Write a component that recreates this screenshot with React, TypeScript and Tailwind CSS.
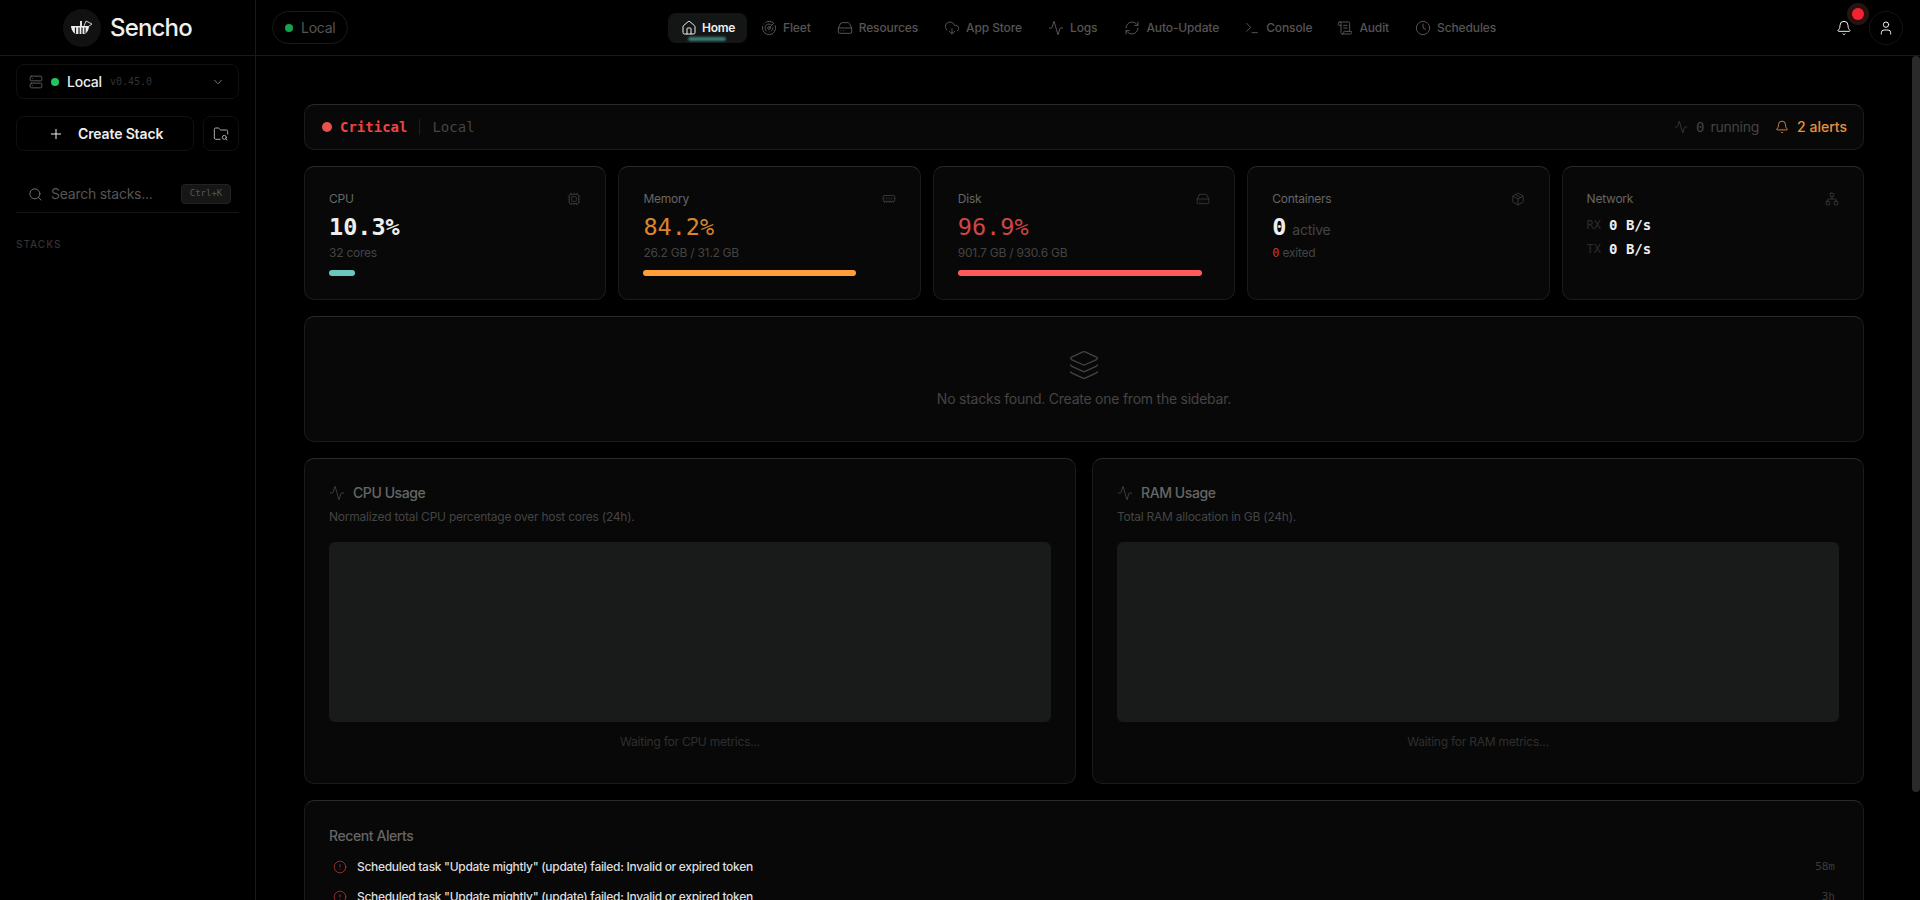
import React from 'react';
import {
  Activity,
  Bell,
  ChevronDown,
  CircleAlert,
  Clock,
  CloudDownload,
  Cpu,
  FolderSearch,
  HardDrive,
  House,
  Layers,
  MemoryStick,
  Network,
  Package,
  Plus,
  Radar,
  RefreshCw,
  ScrollText,
  Search,
  Server,
  Terminal,
  User,
} from 'lucide-react';

const sans = "font-['Inter','Liberation_Sans',sans-serif]";
const mono = "font-['DejaVu_Sans_Mono','Liberation_Mono',monospace] tracking-normal";
const panel = 'rounded-[10px] border border-[#1b1b1b] border-t-[#2a2a2a] bg-[#080808]';

const navItems = [
  { label: 'Fleet', icon: Radar, gap: 'ml-[14px]' },
  { label: 'Resources', icon: HardDrive, gap: 'ml-[26px]' },
  { label: 'App Store', icon: CloudDownload, gap: 'ml-[26px]' },
  { label: 'Logs', icon: Activity, gap: 'ml-[26px]' },
  { label: 'Auto-Update', icon: RefreshCw, gap: 'ml-[27px]' },
  { label: 'Console', icon: Terminal, gap: 'ml-[25px]' },
  { label: 'Audit', icon: ScrollText, gap: 'ml-[25px]' },
  { label: 'Schedules', icon: Clock, gap: 'ml-[26px]' },
];

function Logo() {
  return (
    <div className="flex h-[38px] w-[38px] items-center justify-center rounded-full bg-[#111]">
      <svg width="24" height="20" viewBox="0 0 24 20" fill="none">
        <path d="M1 8h18c-.3 4.500-2.500 8-6 8H7C3.800 16 1.500 12.500 1 8Z" fill="#eee" />
        <path d="M5.500 9.500v6M9 9.500v6.500M12 9.500v6.500M15 9.500v5.500" stroke="#111" strokeWidth="1.200" />
        <path d="M10 8V3h2v5" fill="#ddd" />
        <path d="M14 8l2-5 6 3-3 2" stroke="#ccc" strokeWidth="1" />
      </svg>
    </div>
  );
}

function TopBar() {
  return (
    <header className="flex h-14 shrink-0 items-center border-b border-[#1a1a1a]">
      <div className="flex h-full w-[256px] shrink-0 items-center border-r border-[#1a1a1a] pl-[63px]">
        <Logo />
        <span className="ml-[9px] text-2xl leading-none font-medium tracking-[-0.035em] text-[#efefef]">Sencho</span>
      </div>

      <div className="ml-4 flex h-[33px] w-[76px] items-center rounded-full border border-[#1a1a1a] pl-3">
        <span className="h-2 w-2 rounded-full bg-[#16a34a]" />
        <span className="ml-2 text-sm text-[#555]">Local</span>
      </div>

      <nav className="ml-[320px] flex items-center">
        <div className="relative flex h-[30px] w-[79px] items-center rounded-lg bg-[#141515] pl-[13px] text-[#eee]">
          <House size={16} strokeWidth={1.5} />
          <span className="ml-[5px] text-xs font-semibold tracking-[-0.02em]">Home</span>
          <span className="absolute top-[24px] left-[20px] h-[4px] w-[38px] rounded-full bg-[#3b7f78] blur-[1px]" />
        </div>
        {navItems.map((item) => (
          <div key={item.label} className={`flex items-center text-[#555] ${item.gap}`}>
            <item.icon size={16} strokeWidth={1.5} />
            <span className="ml-[6px] text-xs font-medium tracking-[-0.01em]">{item.label}</span>
          </div>
        ))}
      </nav>

      <div className="ml-auto flex items-center pr-[17px]">
        <div className="relative mr-[17px]">
          <Bell size={16} strokeWidth={1.5} className="text-[#eee]" />
          <span className="absolute -top-[17px] left-[11px] h-[22px] w-[22px] rounded-full bg-[#2b1212] p-[5px]">
            <span className="block h-3 w-3 rounded-full bg-[#f5232f]" />
          </span>
        </div>
        <div className="flex h-[34px] w-[34px] items-center justify-center rounded-full border border-[#141414] text-[#eee]">
          <User size={16} strokeWidth={1.5} />
        </div>
      </div>
    </header>
  );
}

function Sidebar() {
  return (
    <aside className="w-[256px] shrink-0 border-r border-[#1a1a1a] px-4 pt-2">
      <div className="flex h-[35px] w-[223px] items-center rounded-lg border border-[#101010] pr-[13px] pl-3">
        <Server size={14} strokeWidth={1.5} className="text-[#666]" />
        <span className="ml-2 h-2 w-2 rounded-full bg-[#22c55e]" />
        <span className="ml-2 text-sm font-medium text-[#eee]">Local</span>
        <span className={`ml-2 text-[10px] text-[#333] ${mono}`}>v0.45.0</span>
        <ChevronDown size={14} strokeWidth={1.5} className="ml-auto text-[#888]" />
      </div>

      <div className="mt-[17px] flex gap-[9px]">
        <div className="flex h-[35px] w-[178px] items-center rounded-lg border border-[#101010] pl-[31px] text-[#eee]">
          <Plus size={16} strokeWidth={1.5} />
          <span className="ml-[14px] text-sm font-semibold tracking-[-0.01em]">Create Stack</span>
        </div>
        <div className="flex h-[35px] w-[36px] items-center justify-center rounded-lg border border-[#101010] text-[#aaa]">
          <FolderSearch size={16} strokeWidth={1.5} />
        </div>
      </div>

      <div className="mt-[19px] flex h-[43px] w-[223px] items-center border-b border-[#161616] pt-[6px] pr-2 pl-3">
        <Search size={15} strokeWidth={1.5} className="text-[#777]" />
        <span className="ml-2 text-sm text-[#555]">Search stacks...</span>
        <span className={`ml-auto flex h-5 w-[50px] items-center justify-center rounded border border-[#222] bg-[#161616] text-[9px] text-[#555] ${mono}`}>
          Ctrl+K
        </span>
      </div>

      <div className="mt-6 text-[10px] font-medium tracking-[0.1em] text-[#333]">STACKS</div>
    </aside>
  );
}

type IconType = React.ComponentType<{ size?: number; strokeWidth?: number; className?: string }>;

function StatCard({ label, icon: Icon, children }: { label: string; icon: IconType; children: React.ReactNode }) {
  return (
    <div className={`h-[134px] px-6 pt-6 ${panel}`}>
      <div className="flex h-4 items-center justify-between">
        <span className="text-xs text-[#666]">{label}</span>
        <Icon size={14} strokeWidth={1.25} className="text-[#444]" />
      </div>
      {children}
    </div>
  );
}

function MetricCard({
  label,
  icon,
  value,
  detail,
  valueClass,
  barClass,
  barWidth,
}: {
  label: string;
  icon: IconType;
  value: string;
  detail: string;
  valueClass: string;
  barClass: string;
  barWidth: number;
}) {
  return (
    <StatCard label={label} icon={icon}>
      <div className={`mt-[6px] h-7 text-[23.5px] leading-7 ${valueClass} ${mono}`}>{value}</div>
      <div className="mt-1 h-4 text-xs leading-4 text-[#444]">{detail}</div>
      <div className={`mt-[9px] h-[6px] rounded-full ${barClass}`} style={{ width: `${barWidth}%` }} />
    </StatCard>
  );
}

function ChartCard({ title, desc, waiting }: { title: string; desc: string; waiting: string }) {
  return (
    <div className={`h-[326px] px-6 pt-6 ${panel}`}>
      <div className="flex h-5 items-center text-[#666]">
        <Activity size={16} strokeWidth={1} className="text-[#555]" />
        <span className="ml-2 text-sm font-medium tracking-[-0.03em]">{title}</span>
      </div>
      <div className="mt-[6px] h-4 text-xs leading-4 text-[#444]">{desc}</div>
      <div className="mt-[17px] h-[180px] rounded-md bg-[#191b1b]" />
      <div className="mt-[12px] text-center text-xs leading-4 text-[#2f2f2f]">{waiting}</div>
    </div>
  );
}

function AlertRow({ time }: { time: string }) {
  return (
    <div className="flex h-[30px] items-center px-1">
      <CircleAlert size={14} strokeWidth={1.25} className="text-[#c23a3a]" />
      <span className="ml-[10px] text-xs font-medium tracking-[-0.025em] text-[#ddd]">
        Scheduled task "Update mightly" (update) failed: Invalid or expired token
      </span>
      <span className={`ml-auto text-[11px] text-[#3a3a3a] ${mono}`}>{time}</span>
    </div>
  );
}

function Dashboard() {
  return (
    <main className="relative h-[844px] flex-1 overflow-hidden">
      <div className="pt-12 pr-14 pl-12">
        <div className={`flex h-[46px] items-center pr-4 pl-[17px] ${panel}`}>
          <span className="h-[10px] w-[10px] rounded-full bg-[#e5534f]" />
          <span className={`ml-2 text-sm font-semibold text-[#ef4444] ${mono}`}>Critical</span>
          <span className="mx-3 h-4 w-px bg-[#1f1f1f]" />
          <span className={`text-sm text-[#444] ${mono}`}>Local</span>
          <div className="ml-auto flex items-center text-[#444]">
            <Activity size={14} strokeWidth={1.25} />
            <span className={`ml-2 text-sm ${mono}`}>0</span>
            <span className="ml-[6px] text-sm">running</span>
          </div>
          <div className="ml-4 flex items-center text-[#e8923a]">
            <Bell size={14} strokeWidth={1.5} />
            <span className="ml-2 text-sm font-medium tracking-normal">2 alerts</span>
          </div>
        </div>

        <div className="mt-4 grid grid-cols-5 gap-3">
          <MetricCard label="CPU" icon={Cpu} value="10.3%" detail="32 cores" valueClass="font-bold text-[#eee]" barClass="bg-[#6cc5bf]" barWidth={10.3} />
          <MetricCard label="Memory" icon={MemoryStick} value="84.2%" detail="26.2 GB / 31.2 GB" valueClass="text-[#d9852f]" barClass="bg-[#ff9f3a]" barWidth={84.2} />
          <MetricCard label="Disk" icon={HardDrive} value="96.9%" detail="901.7 GB / 930.6 GB" valueClass="text-[#d04545]" barClass="bg-[#ff5a5a]" barWidth={96.9} />
          <StatCard label="Containers" icon={Package}>
            <div className="mt-[6px] flex h-7 items-baseline">
              <span className={`text-[23.5px] leading-7 font-bold text-[#eee] ${mono}`}>0</span>
              <span className="ml-[6px] text-sm text-[#444]">active</span>
            </div>
            <div className="mt-1 h-4 text-xs leading-4 text-[#444]">
              <span className={`text-[#c23a3a] ${mono}`}>0</span> exited
            </div>
          </StatCard>
          <StatCard label="Network" icon={Network}>
            <div className={`mt-[6px] flex h-6 items-center text-sm font-semibold text-[#eee] ${mono}`}>
              <span className="mr-2 text-xs font-normal text-[#2c2c2c]">RX</span>0 B/s
            </div>
            <div className={`flex h-6 items-center text-sm font-semibold text-[#eee] ${mono}`}>
              <span className="mr-2 text-xs font-normal text-[#2c2c2c]">TX</span>0 B/s
            </div>
          </StatCard>
        </div>

        <div className={`mt-4 flex h-[126px] flex-col items-center justify-center ${panel}`}>
          <Layers size={32} strokeWidth={1} className="text-[#444]" />
          <p className="mt-2 text-sm text-[#444]">No stacks found. Create one from the sidebar.</p>
        </div>

        <div className="mt-4 grid grid-cols-2 gap-4">
          <ChartCard title="CPU Usage" desc="Normalized total CPU percentage over host cores (24h)." waiting="Waiting for CPU metrics..." />
          <ChartCard title="RAM Usage" desc="Total RAM allocation in GB (24h)." waiting="Waiting for RAM metrics..." />
        </div>

        <div className={`mt-4 px-6 pt-[25px] pb-5 ${panel}`}>
          <div className="mb-[6px] h-5 text-sm leading-5 font-medium tracking-[-0.03em] text-[#666]">Recent Alerts</div>
          <AlertRow time="58m" />
          <AlertRow time="3h" />
        </div>
      </div>
      <div className="absolute top-0 right-0 h-[736px] w-2 rounded-full bg-[#2a2a2a]" />
    </main>
  );
}

export default function App() {
  return (
    <div className={`flex h-[900px] w-full flex-col overflow-hidden bg-black tracking-[-0.015em] ${sans}`}>
      <TopBar />
      <div className="flex min-h-0 flex-1">
        <Sidebar />
        <Dashboard />
      </div>
    </div>
  );
}
